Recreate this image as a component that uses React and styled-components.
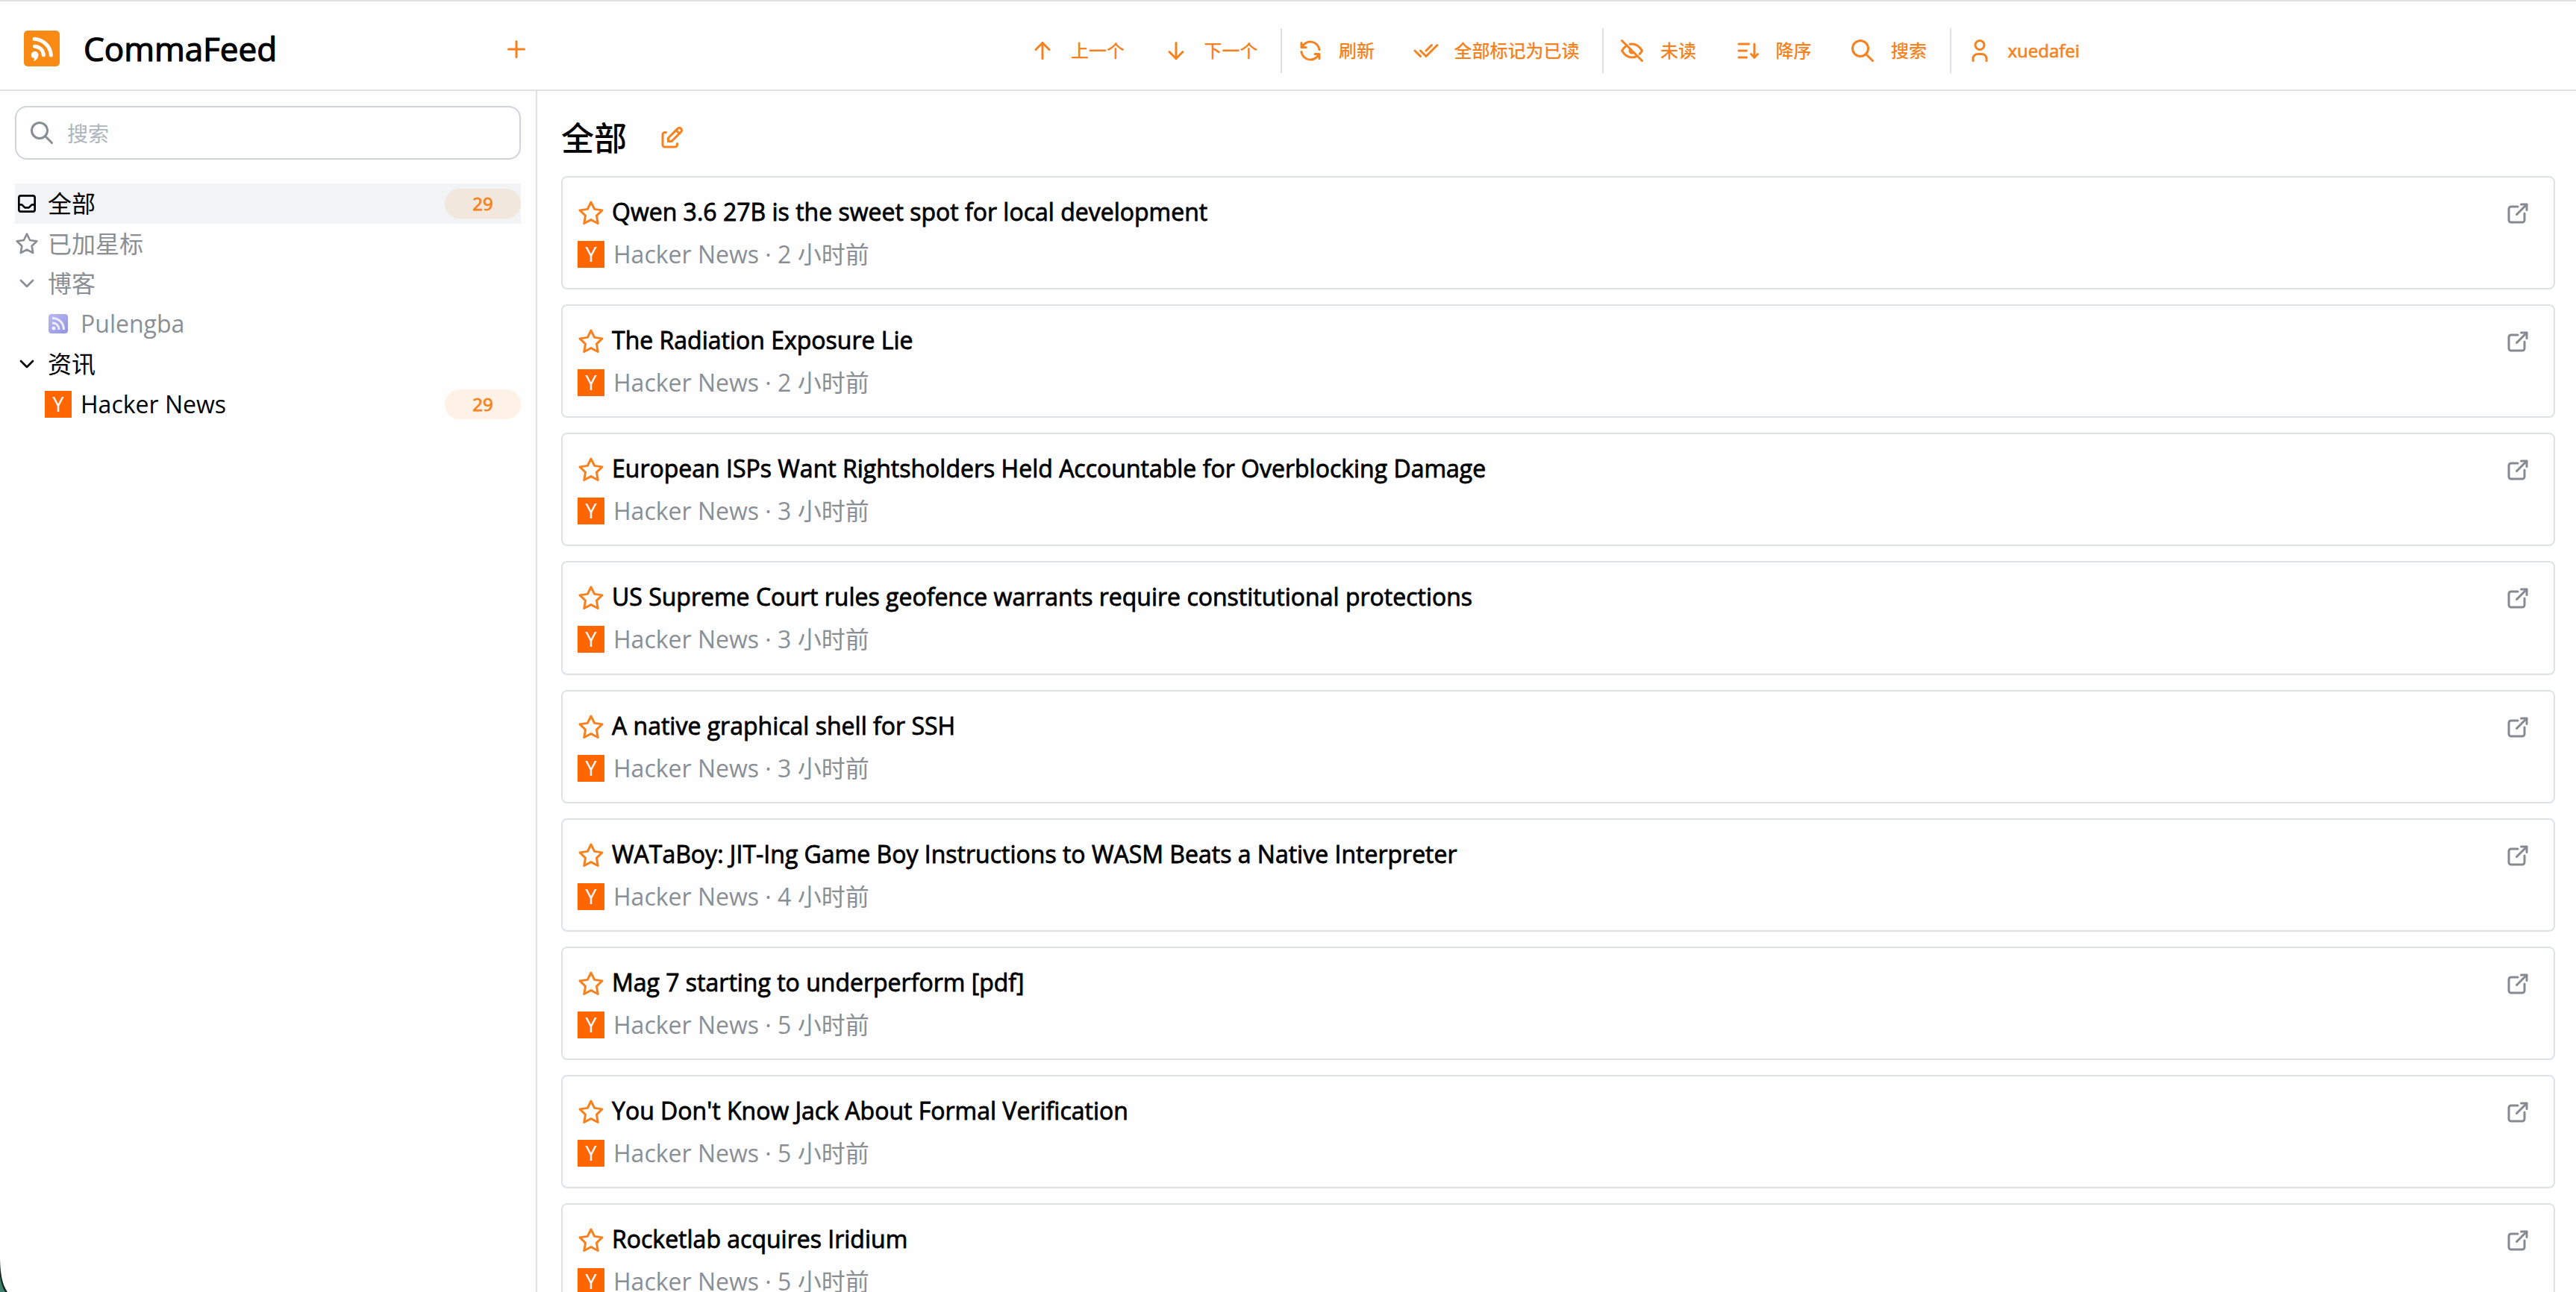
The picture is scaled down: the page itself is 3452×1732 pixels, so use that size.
import React from "react";
import styled, { createGlobalStyle } from "styled-components";
import {
  TbArrowDown,
  TbArrowUp,
  TbChecks,
  TbChevronDown,
  TbEdit,
  TbExternalLink,
  TbEyeOff,
  TbInbox,
  TbPlus,
  TbRefresh,
  TbSearch,
  TbSortDescending,
  TbStar,
  TbUser,
} from "react-icons/tb";

const entries = [
  { title: "Qwen 3.6 27B is the sweet spot for local development", hours: 2 },
  { title: "The Radiation Exposure Lie", hours: 2 },
  { title: "European ISPs Want Rightsholders Held Accountable for Overblocking Damage", hours: 3 },
  { title: "US Supreme Court rules geofence warrants require constitutional protections", hours: 3 },
  { title: "A native graphical shell for SSH", hours: 3 },
  { title: "WATaBoy: JIT-Ing Game Boy Instructions to WASM Beats a Native Interpreter", hours: 4 },
  { title: "Mag 7 starting to underperform [pdf]", hours: 5 },
  { title: "You Don't Know Jack About Formal Verification", hours: 5 },
  { title: "Rocketlab acquires Iridium", hours: 5 },
];

const Logo = () => (
  <svg width="48" height="48" viewBox="0 0 48 48" fill="none">
    <rect width="48" height="48" rx="5" fill="#f98b15" />
    <path d="M14.2 11.2C26 12 35.5 21 36.4 33" stroke="#fff" strokeWidth="5" strokeLinecap="round" />
    <path d="M14.6 21.2C21 21.5 25.8 26 26.4 32.8" stroke="#fff" strokeWidth="5" strokeLinecap="round" />
    <path
      d="M14.4 27.8a4.8 4.8 0 0 0-4.6 4.9c0 2.6 1.9 4.4 4.2 4.4.2 1-.2 2-1 2.9l.8.7c3.6-1.6 5.6-4.6 5.6-8 0-2.900-2.200-4.900-5-4.900z"
      fill="#fff"
    />
  </svg>
);

const RssIcon = () => (
  <svg width="26" height="26" viewBox="0 0 26 26" fill="none">
    <defs>
      <linearGradient id="rss" x1="0" y1="0" x2="1" y2="1">
        <stop offset="0" stopColor="#b9b9f2" />
        <stop offset="1" stopColor="#9494e2" />
      </linearGradient>
    </defs>
    <rect width="26" height="26" rx="4" fill="url(#rss)" />
    <path d="M5 5.500C14 5.500 20.500 12 20.500 21" stroke="#eeeefc" strokeWidth="3" />
    <path d="M5 12C10.500 12 14 15.500 14 21" stroke="#eeeefc" strokeWidth="3" />
    <circle cx="7" cy="19" r="2.500" fill="#eeeefc" />
  </svg>
);

const App = () => {
  return (
    <Page>
      <GlobalStyle />
      <Header>
        <Brand>
          <Logo />
          <BrandName>CommaFeed</BrandName>
          <TbPlus size={36} />
        </Brand>
        <Toolbar>
          <Action><TbArrowUp /> 上一个</Action>
          <Action><TbArrowDown /> 下一个</Action>
          <Divider />
          <Action><TbRefresh /> 刷新</Action>
          <Action><TbChecks /> 全部标记为已读</Action>
          <Divider />
          <Action><TbEyeOff /> 未读</Action>
          <Action><TbSortDescending /> 降序</Action>
          <Action><TbSearch /> 搜索</Action>
          <Divider />
          <Action><TbUser /> <UserName>xuedafei</UserName></Action>
        </Toolbar>
      </Header>
      <Body>
        <SideBar>
          <SearchBox>
            <TbSearch size={36} />
            <Placeholder>搜索</Placeholder>
          </SearchBox>
          <Node $active>
            <TbInbox />
            <NodeName>全部</NodeName>
            <Badge>29</Badge>
          </Node>
          <Node $read>
            <TbStar />
            <NodeName>已加星标</NodeName>
          </Node>
          <Node $read>
            <TbChevronDown />
            <NodeName>博客</NodeName>
          </Node>
          <Node $read $child>
            <FeedIcon><RssIcon /></FeedIcon>
            <NodeName>Pulengba</NodeName>
          </Node>
          <Node>
            <TbChevronDown />
            <NodeName>资讯</NodeName>
          </Node>
          <Node $child>
            <FeedIcon $hn>Y</FeedIcon>
            <NodeName>Hacker News</NodeName>
            <Badge>29</Badge>
          </Node>
        </SideBar>
        <Main>
          <TitleRow>
            <Title>全部</Title>
            <TbEdit size={36} />
          </TitleRow>
          {entries.map((entry) => (
            <Card key={entry.title}>
              <CardBody>
                <CardLine>
                  <Star size={36} />
                  <CardTitle>{entry.title}</CardTitle>
                </CardLine>
                <Meta>
                  <FeedIcon $hn>Y</FeedIcon>
                  <span>Hacker News · {entry.hours} 小时前</span>
                </Meta>
              </CardBody>
              <TbExternalLink size={36} />
            </Card>
          ))}
        </Main>
      </Body>
      <Corner viewBox="0 0 10 44">
        <path d="M0 0C0.500 20 3 34 10 44H0z" fill="#16251f" />
        <path d="M0 22C1.500 33 4 39 7 44H0z" fill="#40806c" />
      </Corner>
    </Page>
  );
};
export default App;

const GlobalStyle = createGlobalStyle`
* {
  box-sizing: border-box;
}
body {
  margin: 0;
  background: #fefefe;
  color: #000;
  font-family: "Open Sans", "Noto Sans CJK SC", sans-serif;
  font-size: 32px;
  overflow: hidden;
}
svg {
  display: block;
  flex-shrink: 0;
}
`
const Page = styled.div`
display: flex;
flex-direction: column;
width: 100%;
height: 1732px;
overflow: hidden;
position: relative;
`
const Header = styled.header`
display: flex;
flex-shrink: 0;
height: 122px;
border-top: 2px solid #e0e1e2;
border-bottom: 2px solid #e0e1e2;
`
const Brand = styled.div`
display: flex;
align-items: center;
width: 720px;
padding: 8px 10px 0 32px;
color: #f6821f;
& > svg:last-child {
  margin-left: auto;
  margin-top: 2px;
}
`
const BrandName = styled.h3`
margin: 0 0 0 32px;
font-size: 44px;
line-height: 60px;
font-weight: 400;
color: #000;
-webkit-text-stroke: 1.2px #000;
`
const Toolbar = styled.nav`
display: flex;
align-items: center;
height: 100%;
padding: 14px 0 0 639px;
`
const Action = styled.button`
display: flex;
align-items: center;
gap: 20px;
padding: 0 30.5px 0 20px;
border: none;
background: none;
color: #f6821f;
font-family: inherit;
font-size: 24px;
font-weight: 500;
line-height: 36px;
white-space: nowrap;
& > svg {
  width: 36px;
  height: 36px;
}
`
const UserName = styled.span`
-webkit-text-stroke: 0.7px #f6821f;
`
const Divider = styled.div`
width: 2px;
height: 60px;
background: #dee2e6;
`
const Body = styled.div`
display: flex;
flex: 1;
min-height: 0;
`
const SideBar = styled.aside`
width: 720px;
flex-shrink: 0;
padding: 20px 20px 0;
border-right: 2px solid #dfe1e3;
`
const SearchBox = styled.div`
display: flex;
align-items: center;
gap: 16px;
height: 72px;
margin-bottom: 32px;
padding-left: 16px;
border: 2px solid #d0d4d9;
border-radius: 16px;
& > svg {
  color: #868e96;
}
`
const Placeholder = styled.span`
padding-top: 2px;
font-size: 28px;
line-height: 40px;
color: #adb5bd;
`
const Node = styled.div`
display: flex;
align-items: center;
gap: 12px;
height: 53.8px;
padding-left: ${({ $child }) => ($child ? "40px" : "0")};
background: ${({ $active }) => ($active ? "#f1f3f4" : "none")};
color: ${({ $read }) => ($read ? "#8a8f95" : "#000")};
& > svg {
  width: 32px;
  height: 32px;
}
`
const NodeName = styled.div`
flex: 1;
line-height: 48px;
`
const Badge = styled.div`
width: 102px;
height: 40px;
border-radius: 20px;
background: rgba(253, 126, 20, 0.1);
color: #f6821f;
font-size: 24px;
line-height: 40px;
text-align: center;
-webkit-text-stroke: 0.8px #f6821f;
`
const FeedIcon = styled.div`
display: flex;
align-items: center;
justify-content: center;
flex-shrink: 0;
width: 36px;
height: 36px;
background: ${({ $hn }) => ($hn ? "#ff6600" : "none")};
color: #fff;
font-size: 27px;
line-height: 36px;
`
const Main = styled.main`
flex: 1;
min-width: 0;
padding: 32px 28px 0 32px;
overflow: hidden;
`
const TitleRow = styled.div`
display: flex;
align-items: center;
gap: 42px;
height: 62px;
margin-bottom: 20px;
color: #f6821f;
`
const Title = styled.h3`
margin: 0;
color: #000;
font-size: 44px;
font-weight: 500;
line-height: 62px;
`
const Card = styled.article`
display: flex;
justify-content: space-between;
height: 152.15px;
margin-bottom: 20px;
padding: 26px 30px 0 20px;
border: 2px solid #dfe2e4;
border-radius: 8px;
& > svg {
  margin-top: 4px;
  color: #868a90;
}
`
const CardBody = styled.div`
display: flex;
flex-direction: column;
gap: 14px;
`
const CardLine = styled.div`
display: flex;
align-items: flex-start;
gap: 10px;
height: 44px;
`
const Star = styled(TbStar)`
align-self: center;
color: #f6821f;
`
const CardTitle = styled.div`
line-height: 40px;
-webkit-text-stroke: 0.8px #000;
white-space: nowrap;
`
const Meta = styled.div`
display: flex;
align-items: center;
gap: 12px;
height: 38px;
line-height: 38px;
color: #8a8f95;
`
const Corner = styled.svg`
position: absolute;
left: 0;
bottom: 0;
width: 10px;
height: 44px;
`
